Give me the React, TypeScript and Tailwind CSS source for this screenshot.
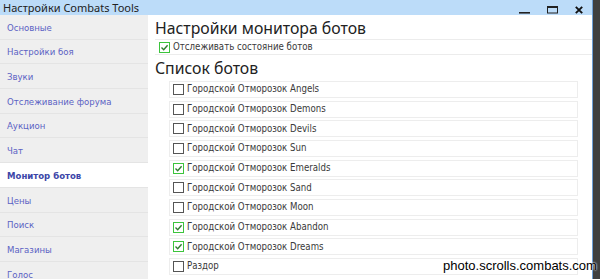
import React from "react";

const menu = [
  "Основные",
  "Настройки боя",
  "Звуки",
  "Отслеживание форума",
  "Аукцион",
  "Чат",
  "Монитор ботов",
  "Цены",
  "Поиск",
  "Магазины",
  "Голос",
];

const bots = [
  { name: "Городской Отморозок Angels", on: false },
  { name: "Городской Отморозок Demons", on: false },
  { name: "Городской Отморозок Devils", on: false },
  { name: "Городской Отморозок Sun", on: false },
  { name: "Городской Отморозок Emeralds", on: true },
  { name: "Городской Отморозок Sand", on: false },
  { name: "Городской Отморозок Moon", on: false },
  { name: "Городской Отморозок Abandon", on: true },
  { name: "Городской Отморозок Dreams", on: true },
  { name: "Раздор", on: false },
];

function Check({ on }: { on: boolean }) {
  if (on) {
    return (
      <span className="flex h-[11px] w-[11px] shrink-0 items-center justify-center border border-[#3cc43c] bg-white">
        <svg width="9" height="9" viewBox="0 0 9 9">
          <path d="M1.5 4.5 L3.7 6.7 L7.6 2.2" fill="none" stroke="#2f7d2f" strokeWidth="1.4" />
        </svg>
      </span>
    );
  }
  return <span className="h-[11px] w-[11px] shrink-0 border border-[#555] bg-white"></span>;
}

export default function App() {
  return (
    <div className="relative flex h-[279px] w-[600px] overflow-hidden bg-[#3f3f3f] font-['DejaVu_Sans_Condensed','DejaVu_Sans',sans-serif]">
      <div className="flex w-[593px] flex-col border-r border-[#6d9fd6]">

        <div className="flex h-[15px] shrink-0 items-center justify-between bg-[#bcdcf9] pl-[3px] pr-[9px]">
          <span className="text-[11px] leading-none text-[#222] font-['Noto_Sans',sans-serif]">
            Настройки Combats Tools
          </span>
          <div className="flex items-center gap-[17px]">
            <svg width="11" height="12" viewBox="0 0 11 12">
              <rect x="0" y="10" width="11" height="1.6" fill="#222" />
            </svg>
            <svg width="11" height="12" viewBox="0 0 11 12">
              <rect x="0.5" y="4.5" width="10" height="6.5" fill="none" stroke="#222" strokeWidth="1" />
              <rect x="0" y="4" width="11" height="2" fill="#222" />
            </svg>
            <svg width="8" height="12" viewBox="0 0 8 12">
              <path d="M0.8 4.8 L7.2 11.2 M7.2 4.8 L0.8 11.2" stroke="#111" strokeWidth="1.9" />
            </svg>
          </div>
        </div>

        <div className="flex min-h-0 flex-1">
          <div className="flex w-[148px] shrink-0 flex-col bg-[#efefef]">
            {menu.map((item) => (
              <div
                key={item}
                className={`flex h-[24.7px] shrink-0 items-center border-b border-[#e4e4e4] pl-[7px] pt-[2px] text-[9.5px] ${
                  item === "Монитор ботов"
                    ? "bg-white font-bold text-[#3c46a8]"
                    : "text-[#5b62c4]"
                }`}
              >
                {item}
              </div>
            ))}
          </div>

          <div className="flex flex-1 flex-col bg-white pl-[7px] text-[#3a3a3a]">
            <h2 className="mt-[5px] text-[15.8px] leading-[16px] text-[#222] font-['Noto_Sans',sans-serif]">
              Настройки монитора ботов
            </h2>
            <div className="mt-[3px] flex h-[16px] items-center gap-[3px] border-y border-[#ececec] pl-[4px] text-[9.6px]">
              <Check on={true} />
              <span>Отслеживать состояние ботов</span>
            </div>
            <h2 className="mt-[5px] text-[15.8px] leading-[16px] text-[#222] font-['Noto_Sans',sans-serif]">
              Список ботов
            </h2>
            <div className="mt-[5px] ml-[14px] mr-[14px] flex flex-col gap-[2.67px]">
              {bots.map((bot) => (
                <div
                  key={bot.name}
                  className="flex h-[17px] shrink-0 items-center gap-[3px] border border-[#ededed] pl-[3px] text-[9.6px]"
                >
                  <Check on={bot.on} />
                  <span>{bot.name}</span>
                </div>
              ))}
            </div>
          </div>
        </div>
      </div>

      <div className="absolute left-[443px] top-[256px] text-[13px] text-black font-['Liberation_Sans',sans-serif] [text-shadow:0_0_2px_#fff,0_0_2px_#fff]">
        photo.scrolls.combats.com
      </div>
    </div>
  );
}
